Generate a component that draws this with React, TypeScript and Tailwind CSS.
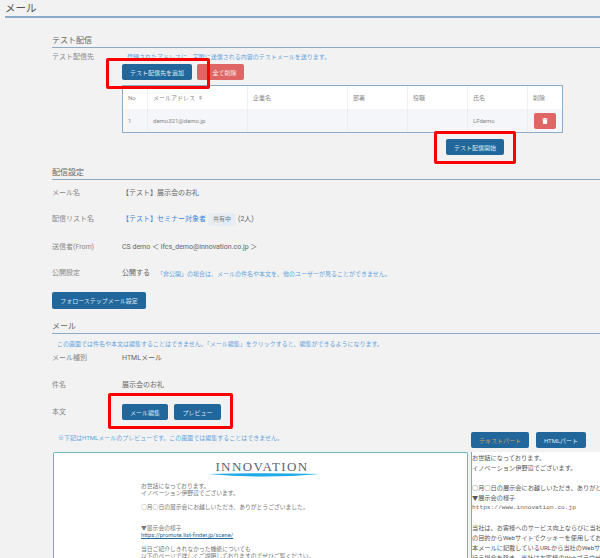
import { FaSort, FaTrash } from 'react-icons/fa'

const font = "font-['Roboto','Noto_Sans_CJK_JP',sans-serif]"
const blueButton =
  'flex items-center justify-center rounded-[2px] bg-[#22679b] text-[6px] text-[#dfe8f0]'

function SectionTitle({ title }: { title: string }) {
  return (
    <div className="h-[13px] border-b border-[#8aacc8] text-[8px] leading-[11px] text-[#666]">
      {title}
    </div>
  )
}

function Row({
  label,
  height,
  children,
}: {
  label: string
  height: string
  children?: React.ReactNode
}) {
  return (
    <div className={`flex items-center ${height}`}>
      <div className="w-[70px] shrink-0 text-[7px] text-[#888]">{label}</div>
      {children}
    </div>
  )
}

function RedFrame({ className }: { className: string }) {
  return (
    <div
      className={`absolute rounded-[2px] border-[3px] border-[#fb0000] ${className}`}
    />
  )
}

const columns = [
  { name: 'No', width: 'w-[25px]' },
  { name: 'メールアドレス', width: 'w-[100px]' },
  { name: '企業名', width: 'w-[100px]' },
  { name: '部署', width: 'w-[60px]' },
  { name: '役職', width: 'w-[60px]' },
  { name: '氏名', width: 'w-[60px]' },
  { name: '削除', width: 'flex-1' },
]

const rowValues = ['1', 'demo321@demo.jp', '', '', '', 'LFdemo']

function TestTable() {
  return (
    <div className="w-[441px] border border-[#8aacc8] text-[6px] text-[#888]">
      <div className="flex h-[23px] bg-white">
        {columns.map((col) => (
          <div
            key={col.name}
            className={`flex items-center gap-[3px] border-r border-[#f1f1f1] px-[5px] last:border-r-0 ${col.width}`}
          >
            {col.name}
            {col.name === 'メールアドレス' && (
              <FaSort className="text-[5px] text-[#aaa]" />
            )}
          </div>
        ))}
      </div>
      <div className="flex h-[23px] bg-[#f4f6fa]">
        {columns.slice(0, 6).map((col, i) => (
          <div
            key={col.name}
            className={`flex items-center border-r border-[#eceef2] px-[5px] ${col.width}`}
          >
            {rowValues[i]}
          </div>
        ))}
        <div className="flex flex-1 items-center justify-center">
          <div className="flex h-[16px] w-[22px] items-center justify-center rounded-[2px] bg-[#e06666] text-white">
            <FaTrash className="text-[6px]" />
          </div>
        </div>
      </div>
    </div>
  )
}

function MailPreview() {
  return (
    <div className="flex h-[107px] w-[547px] gap-[3px] overflow-hidden">
      <div className="h-[107px] w-[415px] shrink-0 overflow-hidden rounded-t-[2px] border border-b-0 border-[#6fb5bd] bg-white pl-[87px] pt-[7px] text-[5.8px] leading-[7px] text-[#777]">
        <div className="ml-[73px] w-[96px] text-center font-['Liberation_Serif',serif] text-[13px] leading-[14px] tracking-[1.4px] text-[#5a6570]">
          INNOVATION
        </div>
        <svg width="112" height="4" viewBox="0 0 112 4" className="-mt-[1px] ml-[67px] block">
          <path d="M0 1 Q56 -0.5 112 1 Q56 6 0 1Z" fill="#1fa9e6" />
        </svg>
        <div className="mt-[6px]">お世話になっております。</div>
        <div>イノベーション伊野辺でございます。</div>
        <div className="mt-[7px]">○月○日の展示会にお越しいただき、ありがとうございました。</div>
        <div className="mt-[14px]">▼展示会の様子</div>
        <div className="text-[#22679b] underline">https://promote.list-finder.jp/scene/</div>
        <div className="mt-[7px]">当日ご紹介しきれなかった機能についても</div>
        <div className="whitespace-nowrap">以下のページで詳しくご説明しておりますのでぜひご覧ください。</div>
      </div>
      <div className="h-[107px] w-[130px] shrink-0 overflow-hidden whitespace-nowrap border-l border-[#6fb5bd] bg-white pt-[1px] text-[6.2px] leading-[10px] text-[#555]">
        <div>お世話になっております。</div>
        <div>イノベーション伊野辺でございます。</div>
        <div className="h-[10px]" />
        <div>○月○日の展示会にお越しいただき、ありがとうございました。</div>
        <div>▼展示会の様子</div>
        <div className="font-['Liberation_Mono',monospace] text-[#666]">https://www.innovation.co.jp</div>
        <div className="h-[10px]" />
        <div>当社は、お客様へのサービス向上ならびに当社</div>
        <div>の目的からWebサイトでクッキーを使用してお</div>
        <div>本メールに記載しているURLから当社のWebサイト</div>
        <div>行う場合を除き、当社はお客様のWebブラウザ</div>
      </div>
    </div>
  )
}

export default function App() {
  return (
    <main className={`relative h-[558px] w-[600px] overflow-hidden bg-[#f2f2f2] ${font}`}>
      <header className="ml-[5px] h-[18px] border-b-2 border-[#8aacc8] pt-[3px] text-[10.5px] leading-[11px] text-[#555]">
        メール
      </header>

      <div className="ml-[52px] w-[548px]">
        <section className="pt-[17px]">
          <SectionTitle title="テスト配信" />
          <div className="flex pt-[4px]">
            <div className="w-[70px] shrink-0 text-[7px] leading-[10px] text-[#888]">テスト配信先</div>
            <div className="flex flex-col">
              <div className="ml-[5px] h-[10px] whitespace-nowrap text-[6px] leading-[10px] text-[#62a4e0]">
                登録されたアドレスに、実際に送信される内容のテストメールを送ります。
              </div>
              <div className="mt-[2px] flex h-[16px] gap-[5px]">
                <button className={`${blueButton} w-[70px]`}>テスト配信先を追加</button>
                <button className="flex w-[47px] items-center justify-center rounded-[2px] bg-[#e06666] pl-[8px] text-[6px] text-[#f6e6e6]">
                  全て削除
                </button>
              </div>
              <div className="mt-[5px]">
                <TestTable />
              </div>
              <button className={`${blueButton} ml-[324px] mt-[6px] h-[16px] w-[58px]`}>
                テスト配信開始
              </button>
            </div>
          </div>
        </section>

        <section className="pt-[12px]">
          <SectionTitle title="配信設定" />
          <Row label="メール名" height="h-[26px]">
            <span className="text-[7px] text-[#666]">【テスト】展示会のお礼</span>
          </Row>
          <Row label="配信リスト名" height="h-[26px]">
            <span className="text-[7px] text-[#3d86d8]">【テスト】セミナー対象者</span>
            <span className="ml-[2px] rounded-[2px] bg-[#e7edf3] px-[5px] py-[2.5px] text-[6px] leading-[8px] text-[#777]">
              共有中
            </span>
            <span className="ml-[2px] text-[7px] text-[#666]">(2人)</span>
          </Row>
          <Row label="送信者(From)" height="h-[30px]">
            <span className="whitespace-nowrap text-[7px] text-[#666]">
              CS demo ＜ lfcs_demo@innovation.co.jp ＞
            </span>
          </Row>
          <Row label="公開設定" height="h-[22px]">
            <span className="text-[7px] text-[#666]">公開する</span>
            <span className="ml-[7px] whitespace-nowrap text-[6px] text-[#62a4e0]">
              「非公開」の場合は、メールの件名や本文を、他のユーザーが見ることができません。
            </span>
          </Row>
          <button className={`${blueButton} mt-[8px] h-[17px] w-[94px]`}>
            フォローステップメール設定
          </button>
        </section>

        <section className="pt-[12px]">
          <SectionTitle title="メール" />
          <div className="ml-[5px] mt-[5px] h-[10px] whitespace-nowrap text-[6px] leading-[10px] text-[#62a4e0]">
            この画面では件名や本文は編集することはできません。「メール編集」をクリックすると、編集ができるようになります。
          </div>
          <Row label="メール種別" height="h-[18px]">
            <span className="text-[7px] text-[#666]">HTMLメール</span>
          </Row>
          <Row label="件名" height="h-[36px]">
            <span className="text-[7px] text-[#666]">展示会のお礼</span>
          </Row>
          <Row label="本文" height="h-[18px]">
            <div className="flex gap-[6px]">
              <button className={`${blueButton} h-[16px] w-[46px]`}>メール編集</button>
              <button className={`${blueButton} h-[16px] w-[47px]`}>プレビュー</button>
            </div>
          </Row>
          <div className="mt-[11px] flex h-[17px] items-start">
            <div className="ml-[6px] w-[413px] whitespace-nowrap pt-[2px] text-[6px] leading-[8px] text-[#62a4e0]">
              ※下記はHTMLメールのプレビューです。この画面では編集することはできません。
            </div>
            <button className={`${blueButton} h-[16px] w-[58px] !text-[#c9a15c]`}>テキストパート</button>
            <button className={`${blueButton} ml-[7px] h-[16px] w-[50px]`}>HTMLパート</button>
          </div>
        </section>
        <div className="ml-px mt-[3px]">
          <MailPreview />
        </div>
      </div>

      <RedFrame className="left-[106px] top-[58px] h-[31px] w-[104px]" />
      <RedFrame className="left-[434px] top-[131px] h-[33px] w-[82px]" />
      <RedFrame className="left-[108px] top-[393px] h-[36px] w-[125px]" />
    </main>
  )
}
